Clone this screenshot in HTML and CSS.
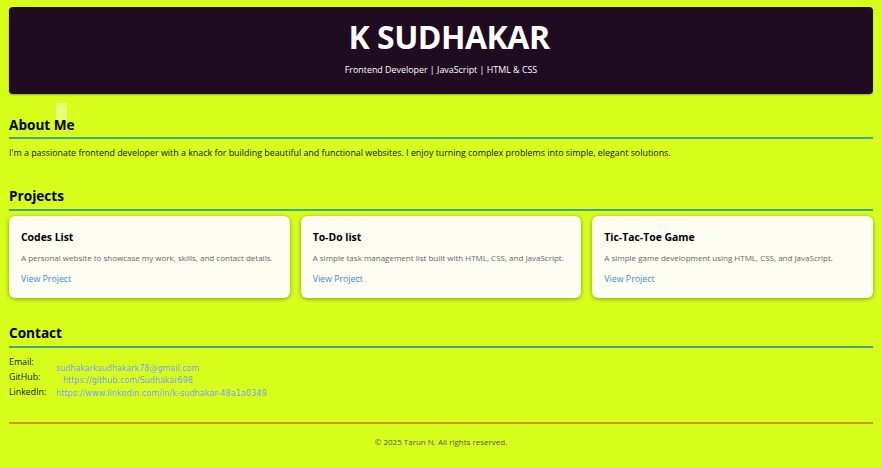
FILE: index.html
```html
<!DOCTYPE html>
<html lang="en">
<head>
<meta charset="utf-8">
<title>K Sudhakar</title>
<link rel="stylesheet" href="styles.css">
</head>
<body>
<div class="page">
  <header class="hero">
    <h1 class="hero-title">K SUDHAKAR</h1>
    <p class="hero-sub">Frontend Developer | JavaScript | HTML &amp; CSS</p>
  </header>
  <span class="ghost"></span>

  <section class="section about">
    <h2 class="section-title">About Me</h2>
    <p class="about-text">I'm a passionate frontend developer with a knack for building beautiful and functional websites. I enjoy turning complex problems into simple, elegant solutions.</p>
  </section>

  <section class="section projects">
    <h2 class="section-title">Projects</h2>
    <div class="cards">
      <div class="card">
        <h3 class="card-title">Codes List</h3>
        <p class="card-desc">A personal website to showcase my work, skills, and contact details.</p>
        <a class="card-link" href="#">View Project</a>
      </div>
      <div class="card">
        <h3 class="card-title">To-Do list</h3>
        <p class="card-desc">A simple task management list built with HTML, CSS, and JavaScript.</p>
        <a class="card-link" href="#">View Project</a>
      </div>
      <div class="card">
        <h3 class="card-title">Tic-Tac-Toe Game</h3>
        <p class="card-desc">A simple game development using HTML, CSS, and JavaScript.</p>
        <a class="card-link" href="#">View Project</a>
      </div>
    </div>
  </section>

  <section class="section contact">
    <h2 class="section-title">Contact</h2>
    <div class="contact-list">
      <div class="contact-row"><span class="label">Email:</span><a class="clink email" href="#">sudhakarksudhakark78@gmail.com</a></div>
      <div class="contact-row"><span class="label">GitHub:</span><a class="clink github" href="#">https://github.com/Sudhakar698</a></div>
      <div class="contact-row"><span class="label">LinkedIn:</span><a class="clink linkedin" href="#">https://www.linkedin.com/in/k-sudhakar-48a1a0349</a></div>
    </div>
  </section>

  <footer class="footer">© 2025 Tarun N. All rights reserved.</footer>
</div>
</body>
</html>
```
FILE: styles.css
```css
* { box-sizing: border-box; }
html, body { margin: 0; padding: 0; }
body {
  background: #d8ff1c;
  font-family: "Open Sans", "Noto Sans", sans-serif;
  color: #111;
}
.page {
  position: relative;
  padding: 7px 9px 0 9px;
}
.hero {
  background: #200c20;
  border-radius: 4px;
  padding: 14px 0 17px;
  text-align: center;
  color: #fff;
  box-shadow: 0 1px 2px rgba(0,0,0,0.3);
}
.hero-title {
  margin: 0;
  padding-left: 16px;
  font-size: 32px;
  line-height: 32px;
  font-weight: 700;
  letter-spacing: -0.5px;
}
.hero-sub {
  margin: 10px 0 0;
  font-size: 8.9px;
  line-height: 14px;
}
.ghost {
  position: absolute;
  left: 56px;
  top: 103px;
  width: 11px;
  height: 17px;
  background: #e6ff7a;
}
.section-title {
  margin: 0;
  font-size: 13.6px;
  line-height: 20px;
  font-weight: 700;
  color: #000;
  border-bottom: 2px solid #3fa88a;
}
.about { margin-top: 21px; }
.about .section-title { padding-bottom: 2px; }
.about-text {
  margin: 7px 0 0;
  font-size: 8.9px;
  line-height: 14px;
  color: #111;
}
.projects { margin-top: 26px; }
.projects .section-title { padding-bottom: 3px; }
.cards {
  margin-top: 5px;
  display: grid;
  grid-template-columns: 1fr 1fr 1fr;
  gap: 11px;
}
.card {
  background: #fdfdf2;
  border-radius: 6px;
  height: 82px;
  padding: 14px 12px 0;
  box-shadow: 0 1px 4px rgba(60,70,0,0.55);
}
.card-title {
  margin: 0;
  font-size: 10.4px;
  line-height: 14px;
  font-weight: 700;
  color: #000;
}
.card-desc {
  margin: 7px 0 0;
  font-size: 8px;
  line-height: 14px;
  color: #666;
  white-space: nowrap;
}
.card-link {
  display: block;
  margin-top: 7px;
  font-size: 8.8px;
  line-height: 14px;
  color: #3c8ad6;
  text-decoration: none;
}
.contact { margin-top: 25px; }
.contact .section-title { padding-bottom: 3px; }
.contact-list {
  margin-top: 7px;
  display: flex;
  flex-direction: column;
}
.contact-row {
  display: flex;
  align-items: flex-start;
  height: 15px;
  font-size: 8.8px;
  line-height: 15px;
}
.label {
  width: 47px;
  color: #111;
}
.clink {
  font-family: "DejaVu Sans", sans-serif;
  font-size: 8px;
  color: #7a9ef0;
  text-decoration: none;
}
.email { padding-top: 6px; }
.github { padding-top: 3px; margin-left: 7px; }
.linkedin { padding-top: 1px; font-size: 8.2px; }
.footer {
  margin-top: 22px;
  border-top: 2px solid #c89a22;
  padding-top: 11px;
  text-align: center;
  font-size: 8px;
  line-height: 14px;
  color: #555;
}
```
